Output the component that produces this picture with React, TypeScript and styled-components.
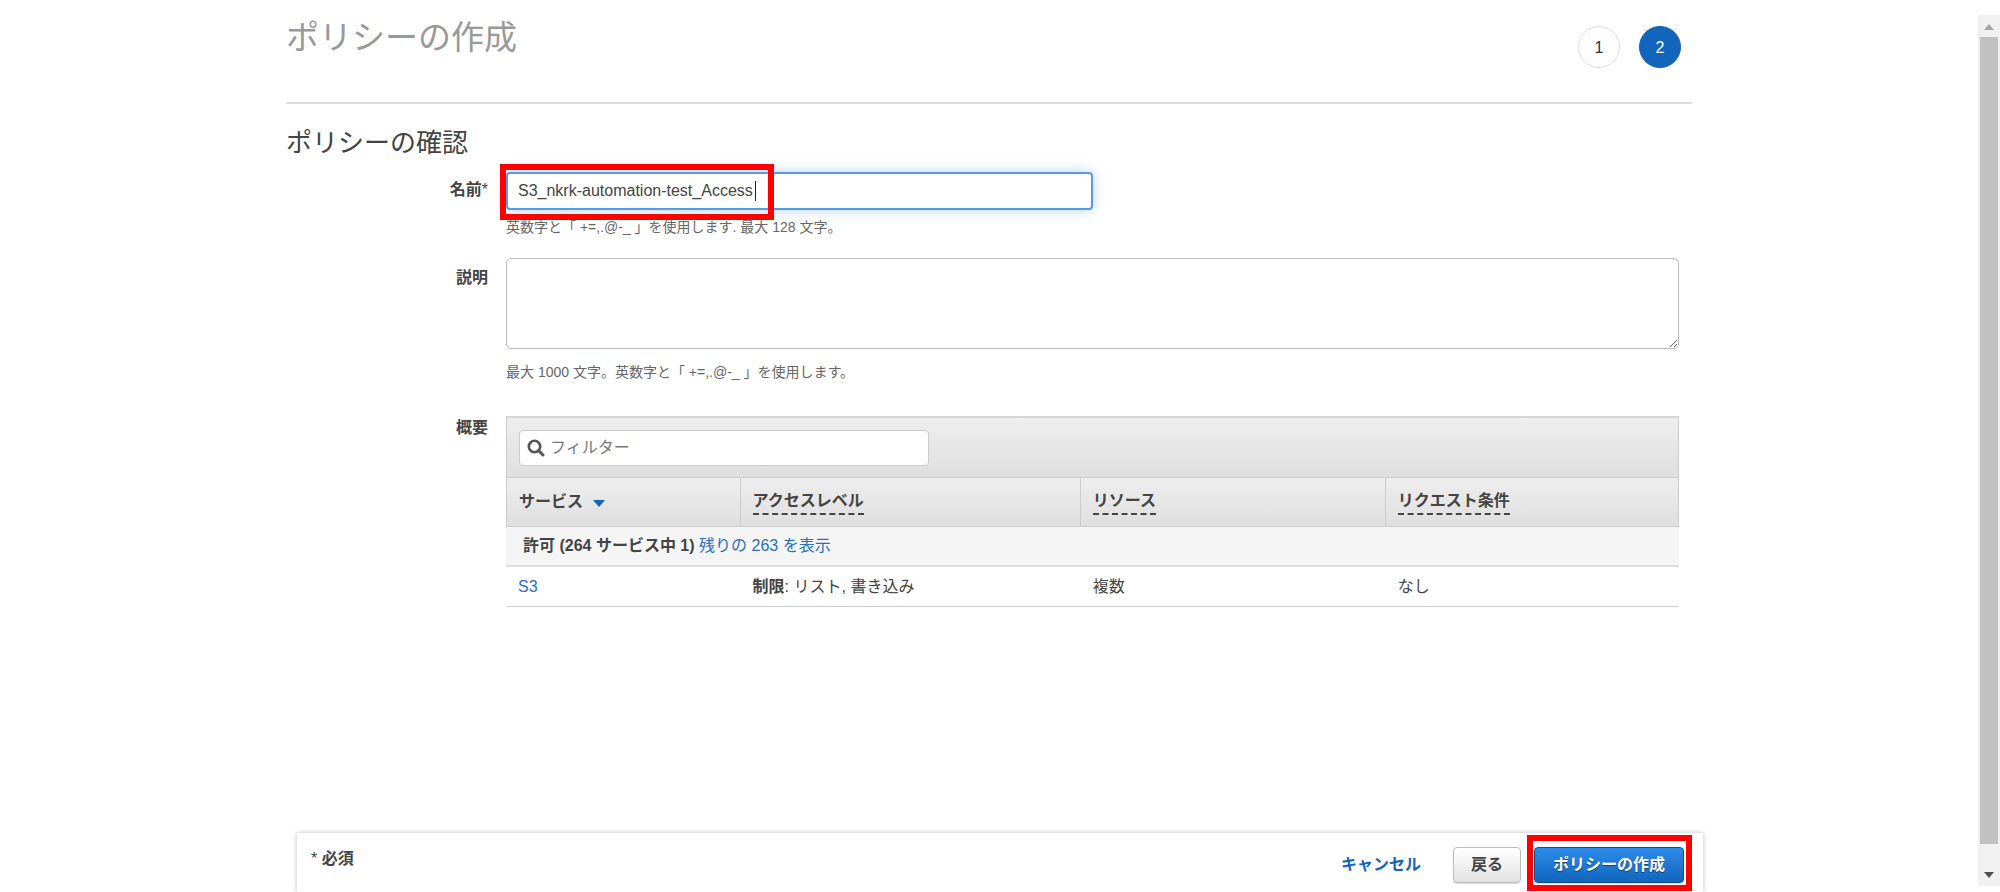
import React from 'react';
import styled, { createGlobalStyle } from 'styled-components';

const GlobalStyle = createGlobalStyle`
  *, *::before, *::after { box-sizing: border-box; }
  body {
    margin: 0;
    background: #fff;
    color: #444;
    font-family: "Liberation Sans", "Noto Sans CJK JP", sans-serif;
    font-size: 16px;
    line-height: 24px;
  }
  input, textarea, button { font: inherit; color: inherit; }
`;

const Shell = styled.div`
  display: flex;
  min-height: 100vh;
`;

const Main = styled.div`
  flex: 1;
  min-width: 0;
  display: flex;
  flex-direction: column;
`;

const Content = styled.main`
  flex: 1;
  width: 100%;
  max-width: 1406px;
  margin: 0 auto;
`;

const PageHeader = styled.header`
  display: flex;
  justify-content: space-between;
  height: 104px;
  padding: 14px 11px 0 0;
  border-bottom: 2px solid #ddd;
`;

const PageTitle = styled.h1`
  margin: 0;
  font-size: 33px;
  font-weight: 400;
  line-height: 48px;
  color: #999;
`;

const Steps = styled.ol`
  display: flex;
  gap: 19px;
  margin: 0;
  padding: 12px 0 0;
  list-style: none;
`;

const Step = styled.li<{ $active?: boolean }>`
  width: 42px;
  height: 42px;
  border: 1px solid ${p => (p.$active ? '#1166bb' : '#ddd')};
  border-radius: 50%;
  background: ${p => (p.$active ? '#1166bb' : '#fff')};
  color: ${p => (p.$active ? '#fff' : '#333')};
  line-height: 42px;
  text-align: center;
`;

const SectionTitle = styled.h2`
  margin: 21px 0 11px;
  font-size: 26px;
  font-weight: 400;
  line-height: 36px;
`;

const FormRow = styled.div<{ $space: number }>`
  display: grid;
  grid-template-columns: 202px 1fr;
  column-gap: 18px;
  padding-right: 13px;
  margin-bottom: ${p => p.$space}px;
`;

const Label = styled.label<{ $top: number }>`
  padding-top: ${p => p.$top}px;
  font-weight: 700;
  text-align: right;
`;

const Required = styled.span`
  font-weight: 400;
`;

const NameField = styled.div`
  position: relative;
  width: 50%;
`;

const NameInput = styled.input`
  display: block;
  width: 100%;
  height: 38px;
  padding: 0 10px;
  border: 2px solid #5a9be0;
  border-radius: 4px;
  outline: none;
  box-shadow: 0 0 12px rgba(100, 165, 230, 0.5);
`;

const Caret = styled.span`
  position: absolute;
  top: 9px;
  left: 249px;
  width: 1px;
  height: 20px;
  background: #222;
`;

const Highlight = styled.span`
  position: absolute;
  border: 6px solid #f00;
  pointer-events: none;
`;

const NameHighlight = styled(Highlight)`
  inset: -8px auto auto -6px;
  width: 274px;
  height: 56px;
`;

const SubmitHighlight = styled(Highlight)`
  inset: -12px -8px -8px -7px;
`;

const Hint = styled.p<{ $gap: number }>`
  margin: ${p => p.$gap}px 0 0;
  color: #666;
  font-size: 14px;
  line-height: 20px;
`;

const Description = styled.textarea`
  display: block;
  width: 100%;
  height: 91px;
  padding: 8px 12px;
  border: 1px solid #bbb;
  border-radius: 5px;
  outline: none;
  resize: vertical;
`;

const FilterBar = styled.div`
  height: 61px;
  padding: 12px;
  border: 1px solid #ccc;
  border-top: 2px solid #d6d6d6;
  border-bottom: 0;
  background: linear-gradient(#eee, #dfdfdf);
`;

const FilterBox = styled.label`
  display: flex;
  align-items: center;
  gap: 5px;
  width: 410px;
  height: 36px;
  padding: 0 7px;
  border: 1px solid #ccc;
  border-radius: 4px;
  background: #fff;
`;

const FilterInput = styled.input`
  flex: 1;
  min-width: 0;
  padding: 0;
  border: 0;
  outline: none;
  background: none;
  &::placeholder { color: #777; opacity: 1; }
`;

const Table = styled.table`
  width: 100%;
  table-layout: fixed;
  border-collapse: separate;
  border-spacing: 0;
  text-align: left;
`;

const HeadCell = styled.th`
  height: 50px;
  padding: 0 12px;
  border: 1px solid #ccc;
  border-left-width: 0;
  background: linear-gradient(#eee, #dfdfdf);
  &:first-child { border-left-width: 1px; }
`;

const Term = styled.span`
  display: inline-block;
  border-bottom: 2px dashed #444;
`;

const SortArrow = styled.svg`
  margin-left: 10px;
`;

const GroupCell = styled.th`
  height: 40px;
  padding: 0 17px;
  border-bottom: 2px solid #ddd;
  background: #f5f5f5;
`;

const Cell = styled.td`
  height: 40px;
  padding: 0 12px;
  border-bottom: 1px solid #ccc;
`;

const Link = styled.a`
  color: #2a6fc0;
  font-weight: 400;
  text-decoration: none;
`;

const FooterWrap = styled.div`
  width: 100%;
  max-width: 1428px;
  margin: 0 auto;
  padding-left: 22px;
`;

const Footer = styled.footer`
  display: flex;
  align-items: flex-start;
  justify-content: space-between;
  height: 59px;
  padding: 14px 19px 0 14px;
  background: #fff;
  box-shadow: 0 0 5px rgba(0, 0, 0, 0.25);
`;

const Actions = styled.div`
  display: flex;
  align-items: center;
`;

const CancelLink = styled(Link)`
  margin-right: 32px;
  color: #1166bb;
  font-weight: 700;
`;

const Button = styled.button<{ $primary?: boolean }>`
  height: 36px;
  padding: 0 ${p => (p.$primary ? 18 : 17)}px;
  border: 1px solid ${p => (p.$primary ? '#0d4f96' : '#bbb')};
  border-radius: 4px;
  background: ${p => (p.$primary ? 'linear-gradient(#2e8bea, #1166bb)' : 'linear-gradient(#fff, #e2e2e2)')};
  box-shadow: 0 1px 1px rgba(0, 0, 0, 0.15);
  color: ${p => (p.$primary ? '#fff' : '#444')};
  font-weight: 700;
  text-shadow: ${p => (p.$primary ? '0 1px 1px rgba(0, 0, 0, 0.5)' : 'none')};
  white-space: nowrap;
`;

const Submit = styled.div`
  display: flex;
  position: relative;
  margin-left: 13px;
`;

const ScrollBar = styled.div`
  display: flex;
  flex-direction: column;
  align-items: center;
  width: 22px;
  margin: 15px 0 6px;
  background: #f1f1f1;
`;

const ScrollArrow = styled.svg`
  flex: none;
  width: 22px;
  height: 22px;
`;

const ScrollThumb = styled.div`
  flex: 1;
  width: 18px;
  margin-bottom: 20px;
  background: #c1c1c1;
`;

export default function App() {
  return (
    <Shell>
      <GlobalStyle />
      <Main>
        <Content>
          <PageHeader>
            <PageTitle>ポリシーの作成</PageTitle>
            <Steps>
              <Step>1</Step>
              <Step $active aria-current="step">2</Step>
            </Steps>
          </PageHeader>
          <SectionTitle>ポリシーの確認</SectionTitle>

          <FormRow $space={21}>
            <Label $top={6} htmlFor="name">名前<Required>*</Required></Label>
            <div>
              <NameField>
                <NameInput id="name" type="text" defaultValue="S3_nkrk-automation-test_Access" />
                <Caret />
                <NameHighlight />
              </NameField>
              <Hint $gap={7}>英数字と「 +=,.@-_ 」を使用します. 最大 128 文字。</Hint>
            </div>
          </FormRow>

          <FormRow $space={34}>
            <Label $top={8} htmlFor="description">説明</Label>
            <div>
              <Description id="description" />
              <Hint $gap={13}>最大 1000 文字。英数字と「 +=,.@-_ 」を使用します。</Hint>
            </div>
          </FormRow>

          <FormRow $space={24}>
            <Label as="div" $top={0} id="summary">概要</Label>
            <div>
              <FilterBar>
                <FilterBox>
                  <svg width="18" height="18" viewBox="0 0 18 18" fill="none" stroke="#555" aria-hidden="true">
                    <circle cx="7.5" cy="7.5" r="5.7" strokeWidth="2.6" />
                    <path d="M11.8 11.8 16 16" strokeWidth="3" strokeLinecap="round" />
                  </svg>
                  <FilterInput type="text" placeholder="フィルター" aria-label="フィルター" />
                </FilterBox>
              </FilterBar>
              <Table aria-labelledby="summary">
                <colgroup>
                  <col style={{ width: '20%' }} />
                  <col style={{ width: '29%' }} />
                  <col style={{ width: '26%' }} />
                  <col style={{ width: '25%' }} />
                </colgroup>
                <thead>
                  <tr>
                    <HeadCell>
                      サービス
                      <SortArrow width="12" height="7" viewBox="0 0 12 7" aria-hidden="true">
                        <path d="M0 0h12L6 7z" fill="#1166bb" />
                      </SortArrow>
                    </HeadCell>
                    <HeadCell><Term>アクセスレベル</Term></HeadCell>
                    <HeadCell><Term>リソース</Term></HeadCell>
                    <HeadCell><Term>リクエスト条件</Term></HeadCell>
                  </tr>
                </thead>
                <tbody>
                  <tr>
                    <GroupCell colSpan={4}>
                      許可 (264 サービス中 1) <Link href="#all">残りの 263 を表示</Link>
                    </GroupCell>
                  </tr>
                  <tr>
                    <Cell><Link href="#s3">S3</Link></Cell>
                    <Cell><b>制限</b>: リスト, 書き込み</Cell>
                    <Cell>複数</Cell>
                    <Cell>なし</Cell>
                  </tr>
                </tbody>
              </Table>
            </div>
          </FormRow>
        </Content>

        <FooterWrap>
          <Footer>
            <span>* <b>必須</b></span>
            <Actions>
              <CancelLink href="#cancel">キャンセル</CancelLink>
              <Button type="button">戻る</Button>
              <Submit>
                <Button type="button" $primary>ポリシーの作成</Button>
                <SubmitHighlight />
              </Submit>
            </Actions>
          </Footer>
        </FooterWrap>
      </Main>
      <ScrollBar aria-hidden="true">
        <ScrollArrow viewBox="0 0 22 22"><path d="M6 15h10l-5-6z" fill="#a3a3a3" /></ScrollArrow>
        <ScrollThumb />
        <ScrollArrow viewBox="0 0 22 22"><path d="M6 8h10l-5 6z" fill="#505050" /></ScrollArrow>
      </ScrollBar>
    </Shell>
  );
}
